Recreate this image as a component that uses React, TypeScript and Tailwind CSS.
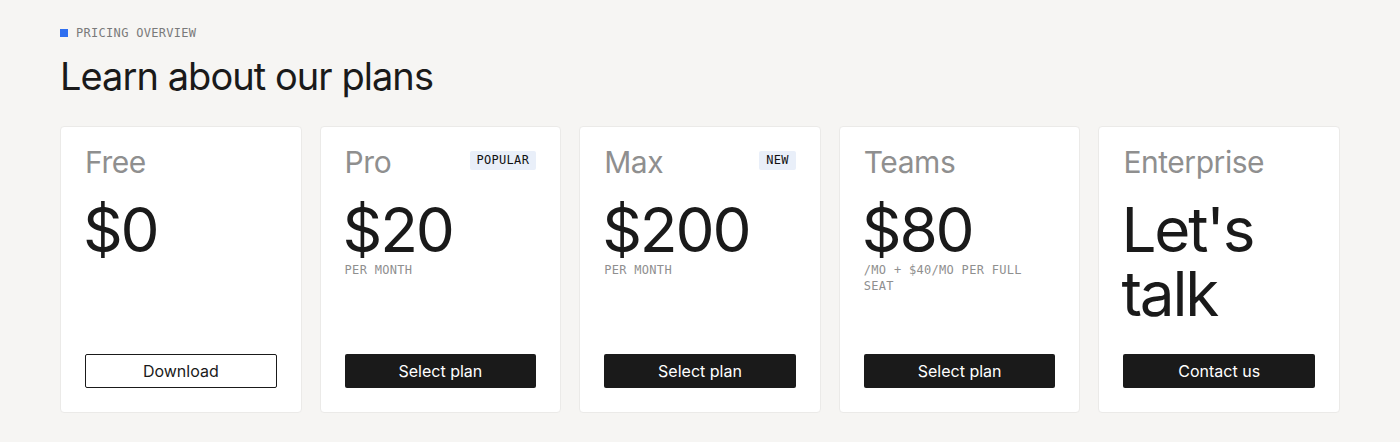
const plans = [
  { name: "Free", price: "$0", note: "", badge: "", cta: "Download", outline: true },
  { name: "Pro", price: "$20", note: "PER MONTH", badge: "POPULAR", cta: "Select plan", outline: false },
  { name: "Max", price: "$200", note: "PER MONTH", badge: "NEW", cta: "Select plan", outline: false },
  { name: "Teams", price: "$80", note: "/MO + $40/MO PER FULL SEAT", badge: "", cta: "Select plan", outline: false },
  { name: "Enterprise", price: "Let's talk", note: "", badge: "", cta: "Contact us", outline: false },
];

const sans = "font-['Inter','Liberation_Sans',sans-serif]";
const mono = "font-['DejaVu_Sans_Mono','Liberation_Mono',monospace]";

export default function App() {
  return (
    <div className={`min-h-[442px] bg-[#f6f5f3] px-[60px] pt-[25px] pb-7 ${sans}`}>
      <div className="flex items-center gap-2">
        <span className="h-2 w-2 bg-[#2f6ff0]" />
        <span className={`text-[12px] leading-4 tracking-[0.3px] text-[#7a7a7a] ${mono}`}>PRICING OVERVIEW</span>
      </div>
      <h1 className="mt-3 text-[38px] leading-[46px] tracking-[-0.025em] text-[#1a1a1a]">Learn about our plans</h1>

      <div className="mt-[27px] grid grid-cols-5 gap-[18px]">
        {plans.map((p) => (
          <div key={p.name} className="flex flex-col rounded-[4px] border border-[#ebeae8] bg-white px-6 pt-5 pb-6">
            <div className="flex items-start justify-between">
              <span className="text-[30px] leading-[30px] tracking-[-0.015em] text-[#8f8f8f]">{p.name}</span>
              {p.badge && (
                <span className={`mt-[4px] rounded-[2px] bg-[#e9eff9] px-[7px] text-[12px] leading-[19px] tracking-[0.3px] text-[#111] ${mono}`}>
                  {p.badge}
                </span>
              )}
            </div>
            <div className="-ml-[2px] mt-[21px] text-[62px] leading-[64px] tracking-[-0.035em] text-[#1a1a1a]">{p.price}</div>
            {p.note && (
              <div className={`text-[12px] leading-4 tracking-[0.3px] text-[#8f8f8f] ${mono}`}>{p.note}</div>
            )}
            <div className="mt-auto pt-7">
              <button
                className={
                  p.outline
                    ? "h-[34px] w-full rounded-[2px] border border-[#1a1a1a] bg-white text-[16px] text-[#1a1a1a]"
                    : "h-[34px] w-full rounded-[2px] bg-[#1a1a1a] text-[16px] text-white"
                }
              >
                {p.cta}
              </button>
            </div>
          </div>
        ))}
      </div>
    </div>
  );
}
